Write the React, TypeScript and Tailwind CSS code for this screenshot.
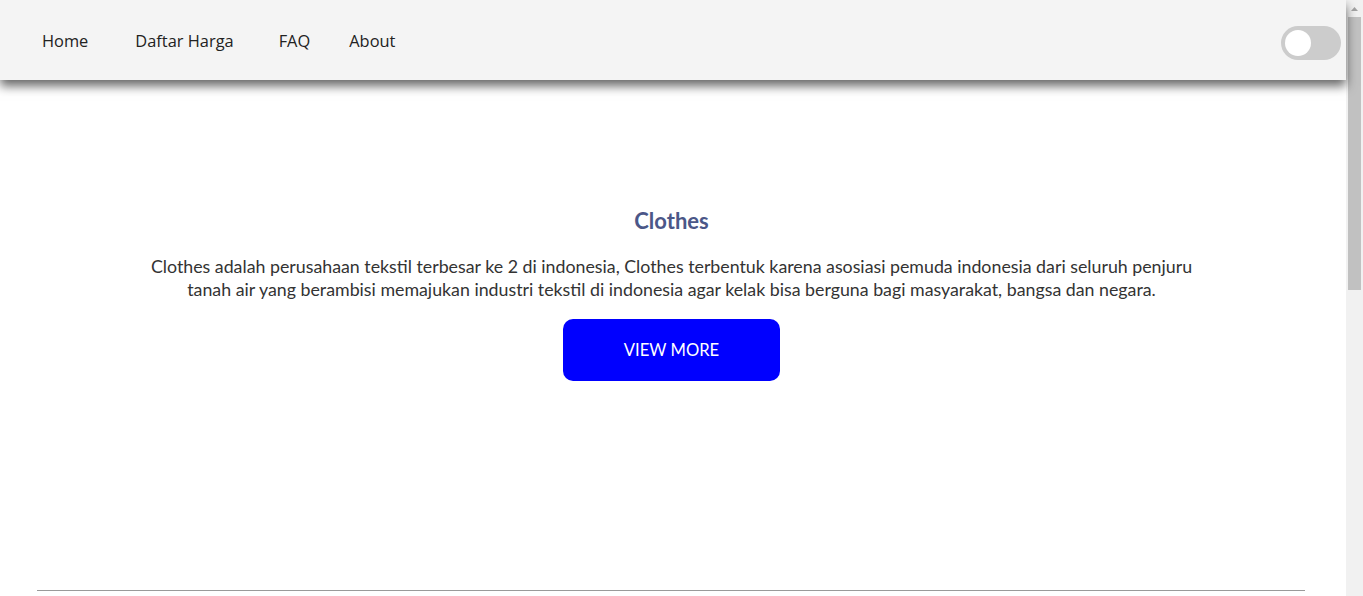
export default function App() {
  return (
    <div className="flex h-[596px] overflow-hidden bg-white">
      <div className="flex-1" style={{ fontFamily: "Lato, 'Open Sans', sans-serif" }}>
        <nav className="relative z-10 flex h-[80px] items-center justify-between bg-[#f4f4f4] pl-[42px] pr-[5px] shadow-[0_6px_10px_rgba(0,0,0,0.6)]">
          <ul className="flex items-center pt-[2px] text-[16.4px] text-[#222]" style={{ fontFamily: "'Open Sans', 'Noto Sans', sans-serif" }}>
            <li className="mr-[47px]">Home</li>
            <li className="mr-[45px]">Daftar Harga</li>
            <li className="mr-[39px]">FAQ</li>
            <li>About</li>
          </ul>
          <div className="relative mt-[6px] h-[34px] w-[60px] rounded-full bg-[#cccccc]">
            <span className="absolute left-[4px] top-[4px] h-[26px] w-[26px] rounded-full bg-white" />
          </div>
        </nav>
        <main className="flex flex-col items-center pr-[3px] pt-[124px] text-center">
          <h1 className="text-[22px] font-bold text-[#4b5788]">Clothes</h1>
          <p className="mt-[18px] max-w-[1062px] text-[17.8px] leading-[23px] text-[#333]">
            Clothes adalah perusahaan tekstil terbesar ke 2 di indonesia, Clothes terbentuk karena asosiasi pemuda indonesia dari seluruh penjuru tanah air yang berambisi memajukan industri tekstil di indonesia agar kelak bisa berguna bagi masyarakat, bangsa dan negara.
          </p>
          <button className="mt-[18px] h-[62px] w-[217px] rounded-[10px] bg-[#0000ff] text-[16.6px] text-white">VIEW MORE</button>
        </main>
        <div className="ml-[37px] mr-[41px] mt-[209px] border-t-[1.5px] border-[#9a9a9a]" />
      </div>
      <aside className="flex h-[596px] w-[17px] shrink-0 flex-col items-center bg-[#f1f1f1]">
        <div className="flex h-[17px] w-full items-center justify-center">
          <svg width="7" height="4" viewBox="0 0 7 4"><polygon points="3.5,0 7,4 0,4" fill="#a3a3a3" /></svg>
        </div>
        <div className="h-[273px] w-[13px] bg-[#c1c1c1]" />
      </aside>
    </div>
  );
}
